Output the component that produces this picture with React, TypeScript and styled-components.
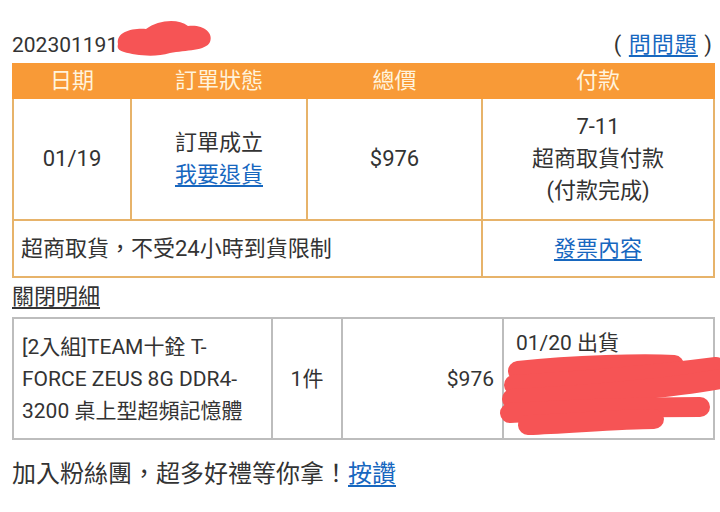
import React from 'react';
import styled, { createGlobalStyle } from 'styled-components';

const GlobalStyle = createGlobalStyle`
  body {
    margin: 0;
    background: #ffffff;
    font-family: "Roboto", "Noto Sans CJK TC", sans-serif;
    color: #333333;
  }
`;

const Page = styled.div`
  width: 720px;
  height: 512px;
  overflow: hidden;
  padding: 31px 7px 0 12px;
  box-sizing: border-box;
`;

const TopBar = styled.div`
  display: flex;
  justify-content: space-between;
  align-items: center;
  height: 28px;
  font-size: 21px;
  line-height: 28px;
  margin-bottom: 4px;
`;

const OrderNo = styled.span`
  position: relative;
`;

const Redact = styled.svg`
  position: absolute;
  pointer-events: none;
  overflow: visible;
`;

const Ask = styled.span`
  font-size: 22px;
  letter-spacing: 1px;
`;

const Link = styled.a`
  color: #1767bf;
  text-decoration: underline;
  text-underline-offset: 3px;
  cursor: pointer;
`;

const OrderTable = styled.table`
  width: 701px;
  border-collapse: collapse;
  font-size: 22px;
  table-layout: fixed;
`;

const HeadCell = styled.th<{ $w: number }>`
  width: ${(p) => p.$w}px;
  height: 34px;
  padding: 0;
  box-sizing: border-box;
  background: #f89a37;
  color: #fff3dc;
  font-weight: 400;
  line-height: 30px;
  text-align: center;
  border: 2px solid #f89a37;
`;

const Cell = styled.td<{ $align?: string; $height?: number }>`
  border: 2px solid #e7b36a;
  box-sizing: border-box;
  text-align: ${(p) => p.$align || 'center'};
  height: ${(p) => p.$height || 0}px;
  padding: 0 7px;
  line-height: 32px;
  vertical-align: middle;
`;

const Toggle = styled.div`
  font-size: 22px;
  line-height: 28px;
  margin: 5px 0 6px;
  text-decoration: underline;
  text-underline-offset: 3px;
  color: #333;
`;

const ItemTable = styled.table`
  width: 701px;
  border-collapse: collapse;
  table-layout: fixed;
  font-size: 21px;
`;

const ItemCell = styled.td<{ $w: number; $align?: string; $top?: boolean }>`
  width: ${(p) => p.$w}px;
  border: 2px solid #bdbdbd;
  height: 121px;
  line-height: 32px;
  padding: ${(p) => (p.$top ? '8px 12px 0' : '0 8px')};
  text-align: ${(p) => p.$align || 'left'};
  vertical-align: ${(p) => (p.$top ? 'top' : 'middle')};
  box-sizing: border-box;
  position: relative;
  overflow: visible;
`;

const Footer = styled.div`
  margin-top: 20px;
  font-size: 24px;
  line-height: 28px;
`;

export default function App() {
  return (
    <>
      <GlobalStyle />
      <Page>
        <TopBar>
          <OrderNo>
            202301191
            <Redact
              width="100"
              height="36"
              viewBox="0 0 100 36"
              style={{ left: 102, top: -11 }}
            >
              <path
                d="M4 24 C 2 12, 18 8, 32 9 C 44 0, 64 -2, 74 6 C 88 4, 100 12, 96 22 C 92 31, 72 30, 56 33 C 40 38, 20 35, 10 32 C 4 30, 3 28, 4 24 Z"
                fill="#f65455"
              />
            </Redact>
          </OrderNo>
          <Ask>
            ( <Link>問問題</Link> )
          </Ask>
        </TopBar>

        <OrderTable>
          <thead>
            <tr>
              <HeadCell $w={118}>日期</HeadCell>
              <HeadCell $w={176}>訂單狀態</HeadCell>
              <HeadCell $w={175}>總價</HeadCell>
              <HeadCell $w={232}>付款</HeadCell>
            </tr>
          </thead>
          <tbody>
            <tr>
              <Cell $height={122}>01/19</Cell>
              <Cell>
                訂單成立
                <br />
                <Link>我要退貨</Link>
              </Cell>
              <Cell>$976</Cell>
              <Cell>
                7-11
                <br />
                超商取貨付款
                <br />
                (付款完成)
              </Cell>
            </tr>
            <tr>
              <Cell $height={57} $align="left" colSpan={3}>
                超商取貨，不受24小時到貨限制
              </Cell>
              <Cell>
                <Link>發票內容</Link>
              </Cell>
            </tr>
          </tbody>
        </OrderTable>

        <Toggle>關閉明細</Toggle>

        <ItemTable>
          <tbody>
            <tr>
              <ItemCell $w={259}>
                [2入組]TEAM十銓 T-
                <br />
                FORCE ZEUS 8G DDR4-
                <br />
                3200 桌上型超頻記憶體
              </ItemCell>
              <ItemCell $w={70} $align="center">
                1件
              </ItemCell>
              <ItemCell $w={161} $align="right">
                $976
              </ItemCell>
              <ItemCell $w={211} $top>
                01/20 出貨
                <Redact
                  width="220"
                  height="84"
                  viewBox="0 0 220 84"
                  style={{ left: 0, top: 42 }}
                >
                  <g stroke="#f65455" strokeLinecap="round" strokeWidth="20" fill="none">
                    <path d="M14 10 C 70 4, 140 2, 170 4" />
                    <path d="M10 24 C 80 20, 150 14, 212 6" />
                    <path d="M8 38 C 80 34, 160 28, 216 18" />
                    <path d="M6 52 C 70 48, 150 46, 196 46" />
                    <path d="M24 64 C 70 62, 120 58, 150 58" />
                  </g>
                </Redact>
              </ItemCell>
            </tr>
          </tbody>
        </ItemTable>

        <Footer>
          加入粉絲團，超多好禮等你拿！<Link>按讚</Link>
        </Footer>
      </Page>
    </>
  );
}
